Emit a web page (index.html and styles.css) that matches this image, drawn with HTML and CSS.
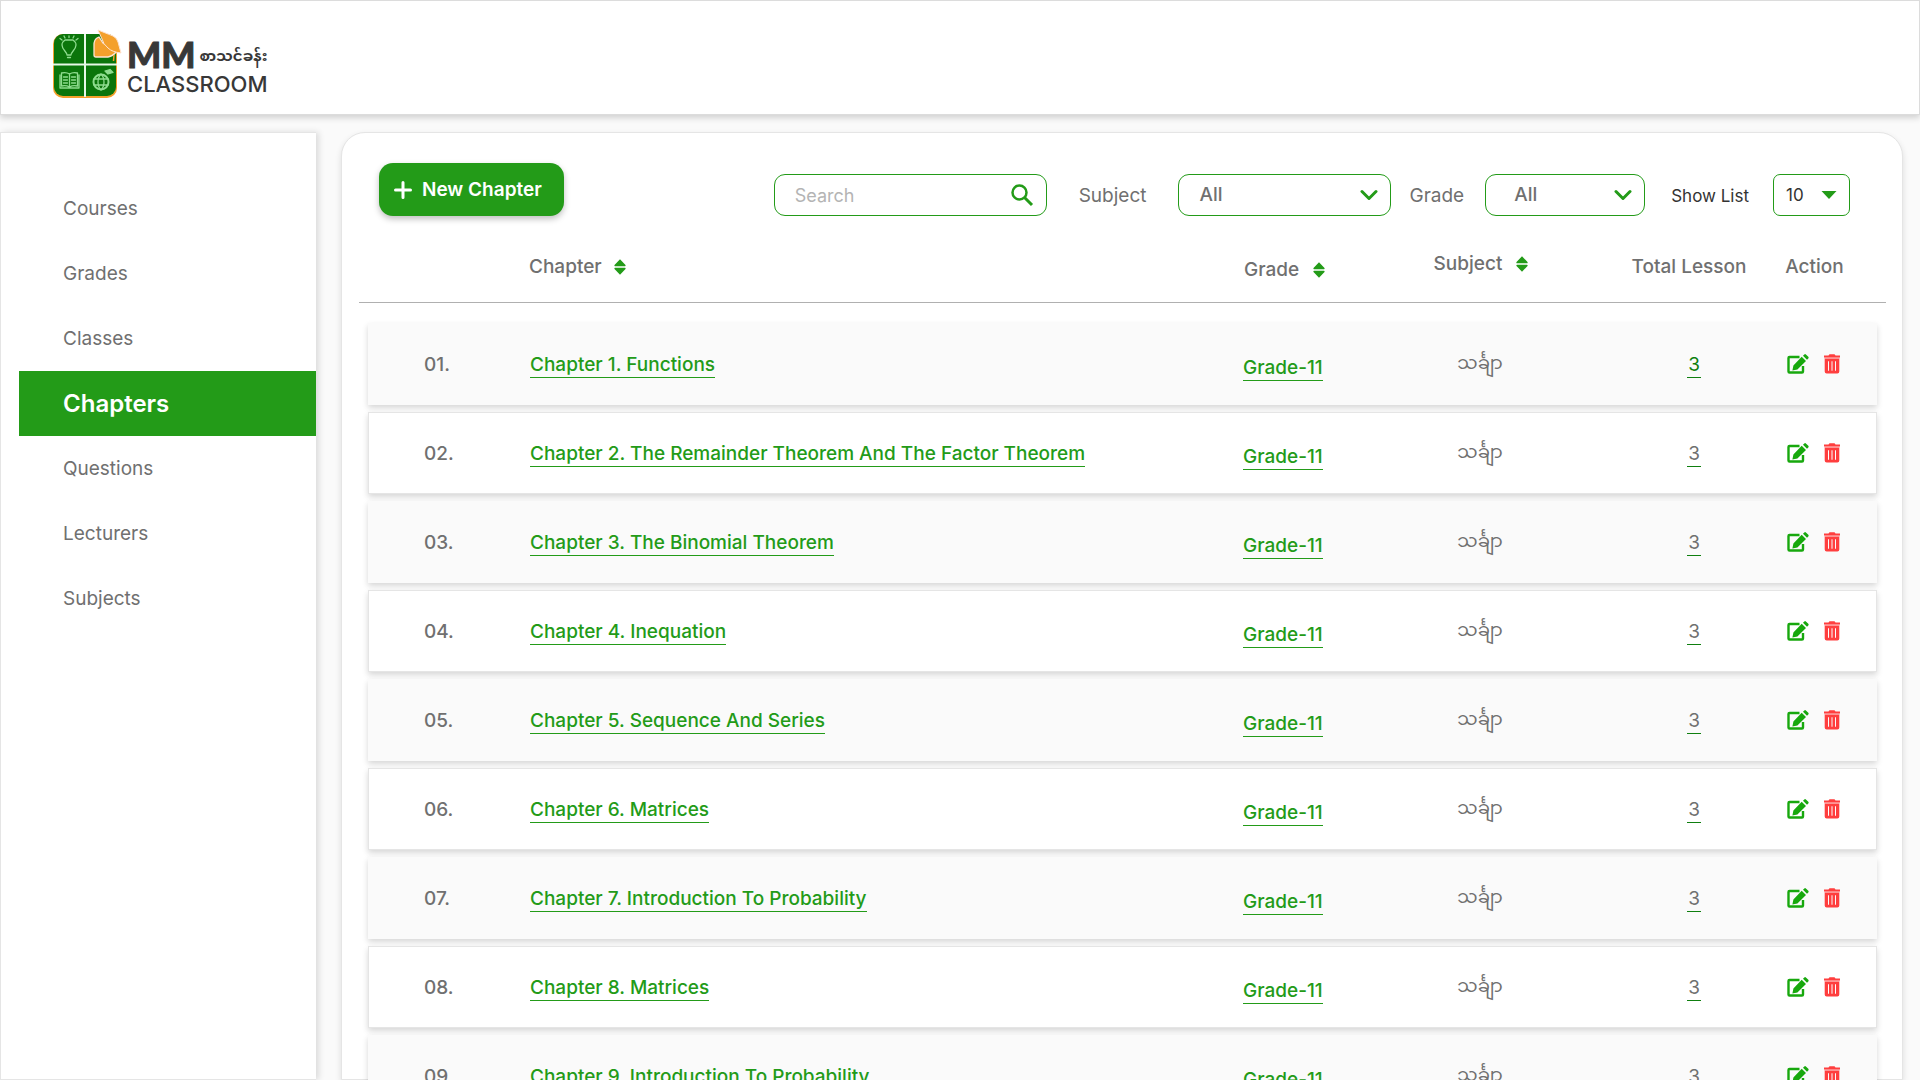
FILE: index.html
```html
<!DOCTYPE html>
<html lang="en">
<head>
<meta charset="utf-8">
<meta name="viewport" content="width=device-width, initial-scale=1">
<title>MM Classroom – Chapters</title>
<link rel="stylesheet" href="styles.css">
</head>
<body>
<svg class="sprite" aria-hidden="true">
  <symbol id="i-sort" viewBox="0 0 12 16"><path d="M6 .3 11.500 6Q12 7.200 10.900 7.200H1.100Q0 7.200.5 6ZM6 15.700.5 10Q0 8.800 1.100 8.800h9.800Q12 8.800 11.500 10Z"/></symbol>
  <symbol id="i-edit" viewBox="0 0 22 20"><path d="M12.500 3H2.500Q1.500 3 1.500 4v13.500q0 1 1 1H15q1 0 1-1V12" fill="none" stroke="currentColor" stroke-width="2.400"/><path d="m14.700 2.700 4.300 4.300-8.600 8.600-5 1 1-5ZM16 1.700l1.300-1.300q.8-.7 1.600 0l2.400 2.400q.7.8 0 1.600L20 5.700Z"/></symbol>
  <symbol id="i-trash" viewBox="0 0 18 20"><path d="M1 1.500h4.500L6.500.3h5l1 1.200H17V3.600H1Z"/><path d="M1.500 3.600h15V5h-15Z" opacity=".55"/><path fill-rule="evenodd" d="M1.700 5h14.600v12.500q0 2-2 2H3.700q-2 0-2-2ZM5 7.300v9.500h1V7.300Zm3.500 0v9.500h1V7.300Zm3.500 0v9.500h1V7.300Z"/></symbol>
  <symbol id="i-chevron" viewBox="0 0 18 12"><path d="m2 2.500 7 7 7-7" fill="none" stroke="currentColor" stroke-width="3" stroke-linecap="round" stroke-linejoin="round"/></symbol>
</svg>

<header class="topbar">
  <a class="logo" href="#" aria-label="MM Classroom">
    <svg class="logo-mark" viewBox="0 0 74 74" aria-hidden="true">
      <rect x="3" y="6" width="64" height="64" rx="10" fill="#f4a02c"/>
      <rect x="4" y="6" width="62" height="62" rx="9" fill="#0b750b"/>
      <path d="M35 6v63M3 36.500h64" stroke="#e8f8e8" stroke-width="2"/>
      <g fill="none" stroke="#8fdc8f" stroke-width="1.300" stroke-linecap="round" stroke-linejoin="round">
        <path d="M17 27c0-3-5-5.500-5-10q0-3 3-5h8q3 2 3 5c0 4.500-5 7-5 10ZM17.500 29.500h3M19 9.500V8M12 12l-2-1.500M26 12l2-1.500M15 10l-1-2M23 10l1-2"/>
        <path d="M19.500 46c-3-2-6-1.500-8-1v13c3-.7 5.500-.5 8 1 2.500-1.500 5-1.700 8-1V45c-2-.5-5-1-8 1Zm0 0v13M10 47v13h19V47M13.500 49h4M13.500 52h4M13.500 55h4M21.500 49h4M21.500 52h4M21.500 55h4"/>
        <circle cx="51" cy="54" r="7.500" stroke-width="2"/><path d="M51 46c-4 4-4 12 0 16 4-4 4-12 0-16ZM44 51h14M44 57h14"/>
        <path d="m55 43 5-1.500 3 3-5 1.500Z" fill="#8fdc8f"/>
      </g>
      <path d="M47 10q-3 2-3 7v10q0 2 2 2h12q5-1 8-5L53 15 49 9Z" fill="#f4a02c" stroke="#ffe3d0" stroke-width="1.300"/>
      <path d="m48 2 15 6q4 2 5 6l3 11q-9-1-13-5-5-4-6-9Z" fill="#f4a02c" stroke="#ffe3d0" stroke-width="1"/>
      <path d="m64 27-.5 6" stroke="#f4a02c" stroke-width="1.500"/>
    </svg>
    <span class="logo-text">
      <span class="logo-top"><span class="logo-mm">MM</span><span class="logo-my" lang="my">စာသင်ခန်း</span></span>
      <span class="logo-name">CLASSROOM</span>
    </span>
  </a>
</header>

<div class="shell">
  <nav class="sidebar" aria-label="Main">
    <a href="#">Courses</a>
    <a href="#">Grades</a>
    <a href="#">Classes</a>
    <a href="#" class="active" aria-current="page">Chapters</a>
    <a href="#">Questions</a>
    <a href="#">Lecturers</a>
    <a href="#">Subjects</a>
  </nav>

  <main class="card">
    <div class="toolbar">
      <button class="new" type="button">
        <svg viewBox="0 0 18 18" aria-hidden="true"><path d="M9 1.500v15M1.500 9h15" stroke="currentColor" stroke-width="3" stroke-linecap="round"/></svg>
        New Chapter
      </button>
      <div class="filters">
        <div class="field search">
          <input type="search" placeholder="Search" aria-label="Search">
          <svg viewBox="0 0 24 24" aria-hidden="true"><circle cx="9.500" cy="9.500" r="7" fill="none" stroke="currentColor" stroke-width="2.500"/><path d="m14.500 14.500 7.500 7.500" stroke="currentColor" stroke-width="3"/></svg>
        </div>
        <label for="subject">Subject</label>
        <div class="field subject">
          <select id="subject"><option>All</option></select>
          <svg viewBox="0 0 18 12" aria-hidden="true"><use href="#i-chevron"/></svg>
        </div>
        <label for="grade">Grade</label>
        <div class="field grade">
          <select id="grade"><option>All</option></select>
          <svg viewBox="0 0 18 12" aria-hidden="true"><use href="#i-chevron"/></svg>
        </div>
        <label class="small" for="count">Show List</label>
        <div class="field count">
          <select id="count"><option>10</option></select>
          <svg viewBox="0 0 16 9" aria-hidden="true"><path d="M.5.5h15L8 8.500Z"/></svg>
        </div>
      </div>
    </div>

    <table>
      <thead>
        <tr>
          <th class="c-num"></th>
          <th class="c-chapter"><button class="sort" type="button">Chapter <svg viewBox="0 0 12 16" aria-hidden="true"><use href="#i-sort"/></svg></button></th>
          <th class="c-grade"><button class="sort wide" type="button">Grade <svg viewBox="0 0 12 16" aria-hidden="true"><use href="#i-sort"/></svg></button></th>
          <th class="c-subject"><button class="sort wide" type="button">Subject <svg viewBox="0 0 12 16" aria-hidden="true"><use href="#i-sort"/></svg></button></th>
          <th class="c-total">Total Lesson</th>
          <th class="c-action">Action</th>
        </tr>
      </thead>
      <tbody id="rows"></tbody>
    </table>
  </main>
</div>
<script src="app.js"></script>
</body>
</html>
```
FILE: styles.css
```css
* { box-sizing: border-box; }

body {
  margin: 0;
  height: 100vh;
  overflow: hidden;
  display: flex;
  flex-direction: column;
  gap: 17px;
  background: #fafafa;
  color: #707070;
  font: 400 19px/26px Inter, "Noto Sans", sans-serif;
}

a { color: inherit; text-decoration: none; }
button, input, select { font: inherit; color: inherit; }
svg { flex: none; fill: currentColor; }
.sprite { display: none; }

/* Top bar */
.topbar {
  flex: none;
  height: 115px;
  padding: 27px 49px;
  background: #fff;
  border: 1px solid #dcdcdc;
  box-shadow: 0 3px 6px rgba(0, 0, 0, .16);
}
.logo { display: inline-flex; gap: 3px; color: #383838; }
.logo-mark { width: 74px; height: 74px; }
.logo-text { display: flex; flex-direction: column; padding-top: 7px; }
.logo-top { display: flex; align-items: center; gap: 4px; height: 38px; }
.logo-mm { font: 900 36px/38px Lato, sans-serif; -webkit-text-stroke: 1px; }
.logo-my { padding-top: 8px; font: 700 15px/30px "Noto Sans Myanmar", sans-serif; }
.logo-name { font-weight: 500; font-size: 22px; line-height: 22px; }

/* Page body */
.shell { flex: 1; min-height: 0; display: flex; gap: 25px; padding-right: 17px; }

.sidebar {
  flex: none;
  width: 316px;
  padding: 43px 0 0 18px;
  background: #fff;
  border: 1px solid #e5e5e5;
  border-right: 0;
  box-shadow: 3px 0 6px rgba(0, 0, 0, .12);
}
.sidebar a { display: block; padding-left: 44px; line-height: 65px; }
.sidebar .active { background: #239b18; color: #fff; font-size: 24px; font-weight: 600; }

.card {
  flex: 1;
  min-width: 0;
  padding: 30px 25px 0 26px;
  background: #fff;
  border: 1px solid #e5e5e5;
  border-radius: 24px 24px 0 0;
  box-shadow: 0 3px 6px rgba(0, 0, 0, .12);
}

/* Toolbar */
.toolbar { display: flex; justify-content: space-between; padding: 0 27px 0 11px; }
.new {
  display: flex;
  align-items: center;
  gap: 10px;
  height: 53px;
  padding: 0 22px 0 15px;
  border: 0;
  border-radius: 14px;
  background: #239b18;
  box-shadow: 0 3px 6px rgba(0, 0, 0, .25);
  color: #fff;
  font-weight: 600;
}
.new svg { width: 18px; height: 18px; }
.filters { display: flex; align-items: center; padding-top: 11px; height: 53px; }
.filters label { padding: 2px 32px 0 32px; }
.filters .subject + label { padding: 2px 21px 0 18px; }
.filters .small { padding: 2px 24px 0 26px; font-size: 17px; color: #333; }

.field { position: relative; height: 42px; color: #239b18; }
.field input, .field select {
  appearance: none;
  width: 100%;
  height: 100%;
  padding: 0 20px;
  background: #fff;
  border: 1px solid #239b18;
  border-radius: 11px;
  outline: 0;
  color: #707070;
}
.field select { font-weight: 500; }
.field input { font-size: 18px; }
.field input::placeholder { color: #b4b4b4; opacity: 1; }
.field svg { position: absolute; right: 13px; top: 50%; translate: 0 -50%; width: 18px; height: 12px; pointer-events: none; }
.search { width: 273px; }
.search svg { width: 24px; height: 24px; }
.subject { width: 213px; }
.grade { width: 160px; }
.grade select { padding-left: 28px; }
.count { width: 77px; }
.count select { padding: 0 12px; border-radius: 7px; font-size: 17px; font-weight: 400; color: #333; }
.count svg { width: 16px; height: 9px; }

/* Chapter table */
table, thead, tbody { display: block; }
tr {
  display: grid;
  grid-template-columns: 161px 1fr 115px 244px 178px 96px;
  align-items: center;
}
th, td { padding: 2px 0 0; text-align: left; font-weight: 500; }
thead tr { height: 73px; margin: 14px -9px 20px; padding: 0 9px; border-bottom: 1px solid #b0b0b0; }
tbody { display: grid; gap: 7px; }
tbody tr { height: 82px; box-shadow: 0 3px 6px rgba(0, 0, 0, .16); background: #fff; border: 1px solid #e5e5e5; }
tbody tr:nth-child(odd) { background: #fafafa; border-color: #fafafa; }

.sort { display: inline-flex; align-items: center; gap: 12px; padding: 0; border: 0; background: none; vertical-align: top; }
.sort.wide { gap: 14px; }
.sort svg { width: 12px; height: 16px; color: #239b18; }

.c-num { padding-left: 55px; }
th.c-grade { padding-top: 8px; }
td.c-grade { padding-top: 6px; }
th.c-subject { padding-bottom: 6px; }
.c-subject, .c-total { text-align: center; }
td.c-subject { font: 400 18px/40px "Noto Sans Myanmar", sans-serif; }
th.c-total { padding-right: 6px; }
td.c-total { padding-left: 6px; font-weight: 400; }
td.c-chapter, td.c-total, td.c-action { padding-top: 0; }
.c-action { padding-right: 29px; text-align: center; }
.actions { display: flex; justify-content: center; gap: 14px; }
.actions button { display: flex; padding: 0; border: 0; background: none; }
.edit { color: #17a80d; }
.edit svg { width: 22px; height: 20px; }
.delete { color: #ff3e3e; }
.delete svg { width: 18px; height: 20px; }

.link { display: inline-block; padding-top: 2px; border-bottom: 1px solid #239b18; color: #239b18; line-height: 24px; white-space: nowrap; }
.c-total .link { padding: 2px 1px 0; border-color: #0f7f0f; color: #707070; }
tr:first-child .c-total .link { color: #0f7f0f; }
```
FILE: app.js
```js
const chapters = [
  'Functions',
  'The Remainder Theorem And The Factor Theorem',
  'The Binomial Theorem',
  'Inequation',
  'Sequence And Series',
  'Matrices',
  'Introduction To Probability',
  'Matrices',
  'Introduction To Probability'
];

document.getElementById('rows').innerHTML = chapters.map((name, i) => `
  <tr>
    <td class="c-num">${String(i + 1).padStart(2, '0')}.</td>
    <td class="c-chapter"><a class="link" href="#">Chapter ${i + 1}. ${name}</a></td>
    <td class="c-grade"><a class="link" href="#">Grade-11</a></td>
    <td class="c-subject" lang="my">သင်္ချာ</td>
    <td class="c-total"><a class="link" href="#">3</a></td>
    <td class="c-action"><div class="actions">
      <button class="edit" type="button" aria-label="Edit"><svg viewBox="0 0 22 20"><use href="#i-edit"/></svg></button>
      <button class="delete" type="button" aria-label="Delete"><svg viewBox="0 0 18 20"><use href="#i-trash"/></svg></button>
    </div></td>
  </tr>`).join('');
```
